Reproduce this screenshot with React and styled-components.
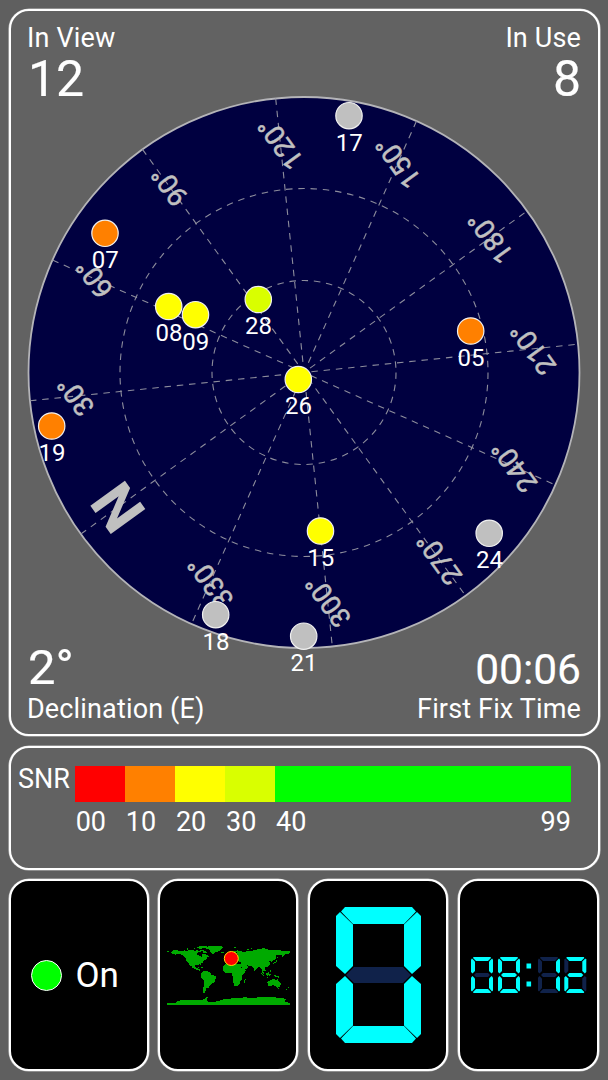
import React from 'react';
import styled, { createGlobalStyle } from 'styled-components';


const GlobalStyle = createGlobalStyle`
    * {
        box-sizing: border-box;
    }

    body {
        margin: 0;
        background: #5f5f5f;
        font-family: Roboto, sans-serif;
        color: #fff;
    }
`;

const Screen = styled.div`
    width: 608px;
    height: 1080px;
    padding: 9px 8px 9px 9px;
    display: flex;
    flex-direction: column;
    gap: 9px;
    overflow: hidden;
`;

const Panel = styled.div`
    border: 2px solid #fff;
    border-radius: 20px;
    box-shadow: 0 0 0 0.6px rgba(255, 255, 255, 0.6);
    background: ${({dark}) => dark ? '#000' : '#626262'};
`;

const SkyPanel = styled(Panel)`
    position: relative;
    height: 727px;
    padding: 11px 17px 9px 16px;
    display: flex;
    flex-direction: column;
    justify-content: space-between;
`;

const SkyCanvas = styled.svg`
    position: absolute;
    left: -11px;
    top: -11px;
    width: 608px;
    height: 740px;
`;

const StatRow = styled.div`
    display: flex;
    justify-content: space-between;
    align-items: flex-end;
`;

const Stat = styled.div`
    display: flex;
    flex-direction: column;
    text-align: ${({align}) => align || 'left'};
`;

const StatLabel = styled.div`
    font-size: 27px;
    line-height: 32px;
    letter-spacing: 0.15px;
`;

const StatValue = styled.div`
    padding-left: 1px;
    font-size: ${({size}) => size}px;
    line-height: ${({line}) => line || 50}px;
    -webkit-text-stroke: 0.15px #fff;
`;

const SnrPanel = styled(Panel)`
    height: 124px;
    margin-top: 0.5px;
    padding: 18.5px 27px 0 7px;
    display: flex;
`;

const SnrTitle = styled.div`
    width: 57px;
    font-size: 27px;
    line-height: 26px;
`;

const SnrScale = styled.div`
    flex: 1;
`;

const SnrBar = styled.div`
    display: flex;
    height: 35.5px;
`;

const SnrBlock = styled.div`
    flex: ${({size}) => size};
    background: ${({color}) => color};
`;

const SnrTicks = styled.div`
    display: flex;
    font-size: 27px;
    line-height: 40px;
`;

const SnrTick = styled.div`
    flex: ${({size}) => size};
    display: flex;
    justify-content: space-between;
    text-indent: 0.7px;
`;

const Tiles = styled.div`
    display: grid;
    grid-template-columns: 139.5px 140px 140px 141.3px;
    gap: 9.9px;
    height: 192px;
    margin-top: 0.5px;
`;

const Tile = styled(Panel)`
    display: flex;
    align-items: center;
    justify-content: center;
`;

const PowerTile = styled(Tile)`
    justify-content: flex-start;
    padding-left: 20px;
`;

const PowerLight = styled.div`
    width: 31px;
    height: 31px;
    margin-right: 13.5px;
    border: 1.5px solid #fff;
    border-radius: 50%;
    background: #00ff00;
`;

const PowerText = styled.div`
    font-size: 35px;
    line-height: 40px;
    padding-top: 2px;
`;

const MapCanvas = styled.svg`
    width: 123px;
    height: 62px;
    flex: none;
`;

const DigitCanvas = styled.svg`
    flex: none;
    display: block;
`;


const CX = 304;
const CY = 372.5;
const RADIUS = 275.5;
const HEADING = -125.9;

const SATELLITES = [
    { id: '17', x: 349, y: 115.7, color: '#c0c0c0' },
    { id: '07', x: 105, y: 233.3, color: '#ff8000' },
    { id: '08', x: 168.7, y: 306.5, color: '#ffff00' },
    { id: '09', x: 195.5, y: 314.7, color: '#ffff00' },
    { id: '28', x: 258.3, y: 299.5, color: '#d9ff00' },
    { id: '05', x: 470.7, y: 331, color: '#ff8000' },
    { id: '26', x: 298.3, y: 379.5, color: '#ffff00' },
    { id: '19', x: 51.7, y: 426, color: '#ff8000' },
    { id: '15', x: 320.5, y: 531, color: '#ffff00' },
    { id: '24', x: 489.2, y: 533.3, color: '#c0c0c0' },
    { id: '18', x: 215.7, y: 614.7, color: '#c0c0c0' },
    { id: '21', x: 303.7, y: 636.2, color: '#c0c0c0' }
];

const SNR = [
    { from: '00', size: 10, color: '#ff0000' },
    { from: '10', size: 10, color: '#ff8000' },
    { from: '20', size: 10, color: '#ffff00' },
    { from: '30', size: 10, color: '#d9ff00' },
    { from: '40', size: 59, color: '#00ff00', to: '99' }
];

// longitude,latitude outlines
const LAND = [
    '-168,66 -162,71 -156,72 -140,70 -128,71 -115,69 -108,69 -95,69 -94,73 -88,70 -82,70 -81,67 -88,65 -94,61 -92,57 -82,55 -79,51 -78,58 -77,62 -70,61 -65,59 -60,55 -56,52 -65,49 -60,46 -70,43 -74,40 -76,35 -81,31 -80,25 -84,30 -90,29 -97,28 -97,22 -94,18 -90,21 -87,21 -89,16 -83,15 -83,9 -77,8 -79,7 -84,9 -88,13 -95,15 -105,19 -108,25 -113,31 -109,23 -117,33 -124,40 -124,48 -133,56 -140,60 -150,60 -162,55 -158,59 -165,61',
    '-180,69 -172,67 -176,65 -180,65',
    '-73,78 -60,83 -35,84 -14,82 -20,76 -24,70 -40,65 -44,60 -52,65 -54,71 -60,76',
    '-85,73 -80,74 -66,68 -62,66 -66,62 -76,64 -74,68 -84,70',
    '-120,72 -115,73 -102,73 -102,69 -116,69',
    '-125,75 -120,77 -113,75 -120,73',
    '-90,77 -78,76 -65,82 -62,84 -85,83 -92,80',
    '-112,76 -98,77 -98,75 -108,74',
    '-24,66 -14,66 -14,64 -22,63',
    '-85,22 -78,23 -74,20 -78,20',
    '-74,20 -68,19 -72,17',
    '-77,8 -72,12 -62,10 -52,5 -50,0 -35,-6 -39,-14 -41,-22 -48,-26 -54,-34 -58,-35 -58,-39 -65,-41 -66,-46 -69,-52 -66,-55 -74,-53 -75,-46 -72,-30 -70,-18 -77,-13 -81,-5 -80,1',
    '-6,35 10,37 11,33 20,32 32,31 37,21 43,12 51,12 47,4 40,-4 40,-15 35,-20 35,-24 32,-28 26,-34 18,-34 12,-18 13,-8 9,0 9,4 4,6 -8,4 -13,8 -17,14 -17,21 -10,30',
    '44,-17 50,-14 47,-25 44,-24',
    '-9,43 -9,37 -5,36 0,38 3,43 9,44 16,38 18,40 13,45 19,42 23,37 26,40 36,37 36,33 34,28 43,13 52,17 59,23 56,26 48,30 57,26 67,25 73,20 77,8 80,14 89,22 92,22 94,17 98,16 100,2 104,2 100,13 105,9 109,12 106,20 112,22 121,28 122,37 118,39 121,40 125,40 127,35 129,36 128,41 135,43 140,49 140,54 136,55 143,59 155,59 157,51 163,58 170,60 179,63 180,69 170,70 160,70 140,73 128,73 113,74 105,78 95,76 80,73 72,72 68,68 60,69 54,68 44,67 41,66 33,67 41,67 36,69 26,71 14,67 5,62 6,58 11,59 13,55 18,60 22,65 25,65 22,61 30,60 21,55 10,54 8,57 8,54 -4,48 -1,44',
    '-5,50 1,51 0,54 -3,58 -6,57',
    '-10,52 -6,54 -7,55 -10,53',
    '51,71 56,75 68,77 56,72',
    '10,79 18,80 24,80 16,77',
    '130,31 136,34 141,38 142,43 145,44 140,42 137,37 131,34',
    '142,46 143,54 144,49',
    '80,9 82,7 80,6',
    '95,5 104,-2 106,-6 100,-2',
    '105,-6 115,-8 115,-9 106,-8',
    '109,2 117,7 118,1 115,-4 110,-2',
    '119,0 125,1 121,-1 123,-5 119,-5',
    '120,18 123,16 122,13 126,8 123,8 120,13',
    '131,-1 138,-2 147,-6 150,-10 143,-8 138,-8 132,-3',
    '114,-22 122,-18 130,-12 137,-12 136,-15 141,-17 142,-11 146,-18 153,-25 153,-30 150,-37 144,-39 138,-34 132,-32 124,-33 115,-34',
    '145,-41 148,-41 147,-43',
    '173,-35 178,-38 175,-41 174,-39',
    '172,-41 174,-42 167,-46',
    '-180,-85 -155,-84 -150,-80 -158,-78 -120,-75 -100,-74 -75,-74 -66,-68 -60,-64 -63,-75 -60,-82 -30,-79 -10,-72 20,-70 50,-67 70,-70 90,-67 130,-67 160,-70 170,-73 162,-79 180,-84 180,-90 -180,-90'
];

const toMap = (outline) => outline.split(' ').map((pair) => {
    const [lon, lat] = pair.split(',').map(Number);
    return `${(lon + 180) * 0.3417},${(90 - lat) * 0.339}`;
}).join(' ');

const polar = (azimuth, r) => {
    const a = (azimuth + HEADING) * Math.PI / 180;
    return [CX + r * Math.sin(a), CY - r * Math.cos(a)];
};

const SkyLabel = ({azimuth}) => {
    const north = azimuth === 0;
    const [x, y] = polar(azimuth, 230);
    return (
        <text
            transform={`translate(${x} ${y}) rotate(${HEADING})`}
            y={north ? 21.5 : 10}
            textAnchor='middle'
            fontSize={north ? 60 : 27.5}
            fontWeight={north ? 700 : 400}
            fill='#c0c0c0'
            stroke='#c0c0c0'
            strokeWidth={north ? 0 : 0.5}
        >
            {north ? 'N' : `${azimuth}°`}
        </text>
    );
};

const SkyView = () => {
    const spokes = Array.from({ length: 12 }, (_, i) => i * 30);
    return (
        <SkyCanvas viewBox='0 0 608 740'>
            <circle cx={CX} cy={CY} r={RADIUS} fill='#000040' stroke='#b4b4b8' strokeWidth='1.8'/>
            <g fill='none' stroke='#8c8c9c' strokeWidth='1.1' strokeDasharray='6.5 5.8'>
                <circle cx={CX} cy={CY} r='92'/>
                <circle cx={CX} cy={CY} r='184'/>
                {
                    spokes.slice(0, 6).map((a) => {
                        const [x1, y1] = polar(a, RADIUS);
                        const [x2, y2] = polar(a + 180, RADIUS);
                        return <line key={'s'+a} x1={x1} y1={y1} x2={x2} y2={y2}/>;
                    })
                }
            </g>
            {
                spokes.map((a) => <SkyLabel azimuth={a} key={'l'+a}/>)
            }
            {
                SATELLITES.map(({id,x,y,color}) => (
                    <g key={id}>
                        <circle cx={x} cy={y} r='13.2' fill={color} stroke='#f0f0f0' strokeWidth='1.2'/>
                        <text x={x + 0.3} y={y + 34.8} textAnchor='middle' fontSize='24' fill='#fff'>{id}</text>
                    </g>
                ))
            }
        </SkyCanvas>
    );
};

const WorldMap = () => (
    <MapCanvas viewBox='0 0 123 62' overflow='visible'>
        <g fill='#00aa00' shapeRendering='crispEdges'>
            {
                LAND.map((d,i) => <polygon points={toMap(d)} key={'m'+i}/>)
            }
        </g>
        <circle cx='64.3' cy='14.5' r='7' fill='#ff0000' stroke='#ffe000' strokeWidth='1'/>
    </MapCanvas>
);

// one digit on an 85x136 grid, segments a to g
const SEGMENTS = {
    a: '9,0 76,0 80,4.5 68,17 17,17 5,4.5',
    b: '81,5 85,9 85,59 76,67 68,59 68,17.5',
    c: '76,69 85,77 85,127 81,131 68,118.5 68,77',
    d: '17,119 68,119 80,131.5 76,136 9,136 5,131.5',
    e: '9,69 17,77 17,118.5 4,131 0,127 0,77',
    f: '4,5 17,17.5 17,59 9,67 0,59 0,9',
    g: '10,68 18,60 67,60 75,68 67,76 18,76'
};

// the same segments at clock size, 22x36
const SMALL = {
    a: '2.5,0 19.5,0 20,1 17,4 5,4 2,1',
    b: '21,1.5 22,2.5 22,15 20.5,16.5 18,14 18,4.5',
    c: '20.5,19 22,20.5 22,33.5 21,34.5 18,31 18,21.5',
    d: '5,32 17,32 20,35 19.5,36 2.5,36 2,35',
    e: '1.5,19 4,21.5 4,31 1,34.5 0,33.5 0,20.5',
    f: '1,1.5 4,4.5 4,14 1.5,16.5 0,15 0,2.5',
    g: '3,18 5,16 17,16 19,18 17,20 5,20'
};

const LIT = {
    0: 'abcdef',
    1: 'bc',
    2: 'abged',
    8: 'abcdefg'
};

const Digit = ({value, segments, x = 0}) => (
    <g transform={`translate(${x} 0)`}>
        {
            Object.keys(segments).map((s) => (
                <polygon points={segments[s]} fill={LIT[value].includes(s) ? '#00ffff' : '#10224a'} key={s}/>
            ))
        }
    </g>
);

const SpeedDigit = () => (
    <DigitCanvas width='85' height='136' viewBox='0 0 85 136'>
        <Digit value={0} segments={SEGMENTS}/>
    </DigitCanvas>
);

const Clock = () => (
    <DigitCanvas width='116' height='36' viewBox='0 0 116 36'>
        {
            [[0,0],[8,27],[1,67],[2,93.3]].map(([value,x]) => (
                <Digit value={value} segments={SMALL} x={x} key={'c'+x}/>
            ))
        }
        <rect x='55.5' y='6.5' width='4.6' height='5' fill='#00ffff'/>
        <rect x='55.5' y='24.5' width='4.6' height='5' fill='#00ffff'/>
    </DigitCanvas>
);

const App = () => (
    <>
        <GlobalStyle/>
        <Screen>
            <SkyPanel>
                <SkyView/>
                <StatRow>
                    <Stat>
                        <StatLabel>In View</StatLabel>
                        <StatValue size={50}>12</StatValue>
                    </Stat>
                    <Stat align='right'>
                        <StatLabel>In Use</StatLabel>
                        <StatValue size={50}>8</StatValue>
                    </Stat>
                </StatRow>
                <StatRow>
                    <Stat>
                        <StatValue size={49}>2°</StatValue>
                        <StatLabel>Declination (E)</StatLabel>
                    </Stat>
                    <Stat align='right'>
                        <StatValue size={42.5} line={46}>00:06</StatValue>
                        <StatLabel>First Fix Time</StatLabel>
                    </Stat>
                </StatRow>
            </SkyPanel>
            <SnrPanel>
                <SnrTitle>SNR</SnrTitle>
                <SnrScale>
                    <SnrBar>
                    {
                        SNR.map(({from,size,color}) => <SnrBlock size={size} color={color} key={'b'+from}/>)
                    }
                    </SnrBar>
                    <SnrTicks>
                    {
                        SNR.map(({from,size,to}) => (
                            <SnrTick size={size} key={'t'+from}>
                                <span>{from}</span>
                                {to ? <span>{to}</span> : null}
                            </SnrTick>
                        ))
                    }
                    </SnrTicks>
                </SnrScale>
            </SnrPanel>
            <Tiles>
                <PowerTile dark>
                    <PowerLight/>
                    <PowerText>On</PowerText>
                </PowerTile>
                <Tile dark>
                    <WorldMap/>
                </Tile>
                <Tile dark>
                    <SpeedDigit/>
                </Tile>
                <Tile dark>
                    <Clock/>
                </Tile>
            </Tiles>
        </Screen>
    </>
);

export default App;
